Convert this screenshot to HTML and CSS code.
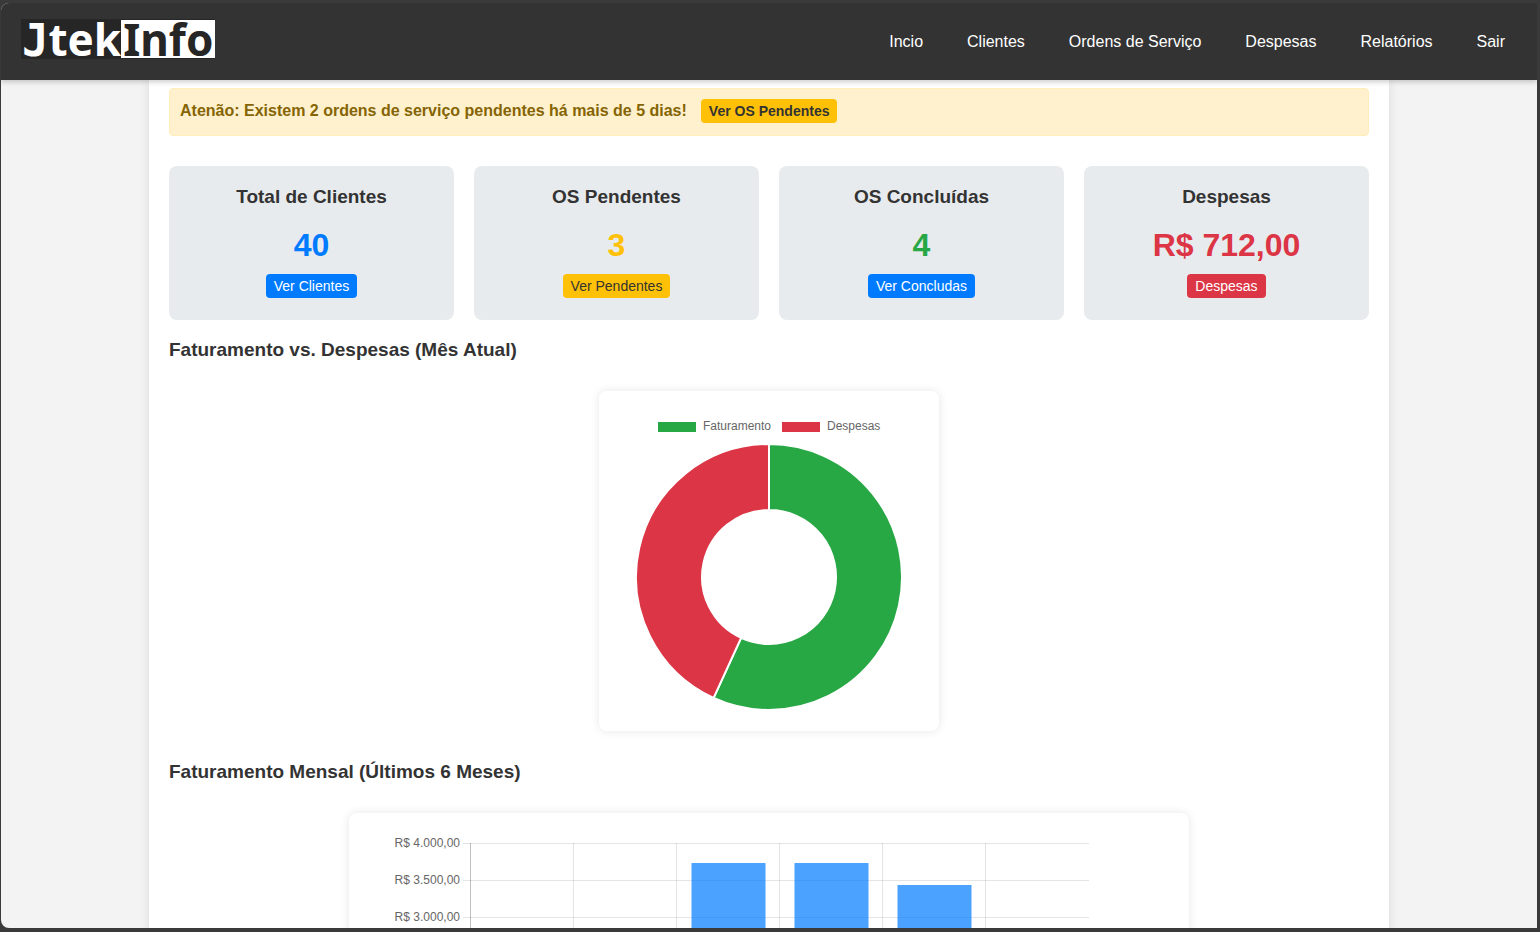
FILE: index.html
```html
<!DOCTYPE html>
<html lang="pt-br">
<head>
    <meta charset="UTF-8">
    <meta name="viewport" content="width=device-width, initial-scale=1.0">
    <title>JtekInfo</title>
    <link rel="stylesheet" href="styles.css">
</head>
<body>
    <div class="page">
        <header class="navbar">
            <a href="#" class="logo"><span class="logo-jtek"><span class="logo-j">J</span>tek</span><span class="logo-info">Info</span></a>
            <nav>
                <ul class="nav-links">
                    <li><a href="#">Incio</a></li>
                    <li><a href="#">Clientes</a></li>
                    <li><a href="#">Ordens de Serviço</a></li>
                    <li><a href="#">Despesas</a></li>
                    <li><a href="#">Relatórios</a></li>
                    <li><a href="#">Sair</a></li>
                </ul>
            </nav>
        </header>

        <main class="container">
            <div class="alert">
                <span>Atenão: Existem 2 ordens de serviço pendentes há mais de 5 dias!</span>
                <a href="#" class="btn btn-warning">Ver OS Pendentes</a>
            </div>

            <div class="cards">
                <div class="card">
                    <h3>Total de Clientes</h3>
                    <p class="value blue">40</p>
                    <a href="#" class="btn btn-primary">Ver Clientes</a>
                </div>
                <div class="card">
                    <h3>OS Pendentes</h3>
                    <p class="value yellow">3</p>
                    <a href="#" class="btn btn-warning">Ver Pendentes</a>
                </div>
                <div class="card">
                    <h3>OS Concluídas</h3>
                    <p class="value green">4</p>
                    <a href="#" class="btn btn-primary">Ver Concludas</a>
                </div>
                <div class="card">
                    <h3>Despesas</h3>
                    <p class="value red">R$ 712,00</p>
                    <a href="#" class="btn btn-danger">Despesas</a>
                </div>
            </div>

            <h3 class="chart-title">Faturamento vs. Despesas (Mês Atual)</h3>
            <div class="chart-box chart-donut">
                <svg viewBox="0 0 300 300">
                    <rect x="39" y="11" width="38" height="10" fill="#28a745"/>
                    <text x="84" y="19">Faturamento</text>
                    <rect x="163" y="11" width="38" height="10" fill="#dc3545"/>
                    <text x="208" y="19">Despesas</text>
                    <g stroke="#fff" stroke-width="2">
                        <path fill="#28a745" d="M150 33A133 133 0 1 1 94.6 286.9L122.1 226.9A67 67 0 1 0 150 99Z"/>
                        <path fill="#dc3545" d="M94.6 286.9A133 133 0 0 1 150 33V99A67 67 0 0 0 122.1 226.9Z"/>
                    </g>
                </svg>
            </div>

            <h3 class="chart-title">Faturamento Mensal (Últimos 6 Meses)</h3>
            <div class="chart-box chart-bar">
                <svg viewBox="0 0 800 400">
                    <!-- grade -->
                    <path class="grid" d="M94 10.5H720M94 47.5H720M94 84.5H720M94 121.5H720M94 158.5H720M94 195.5H720M94 232.5H720M94 269.5H720M94 306.5H720M204.5 10V306M307.5 10V306M410.5 10V306M513.5 10V306M616.5 10V306"/>
                    <path class="axis" d="M101.5 10V306"/>
                    <g text-anchor="end">
                        <text x="91" y="14">R$ 4.000,00</text>
                        <text x="91" y="51">R$ 3.500,00</text>
                        <text x="91" y="88">R$ 3.000,00</text>
                    </g>
                    <!-- barras -->
                    <g class="bars">
                        <rect x="322.5" y="30" width="74" height="276"/>
                        <rect x="425.5" y="30" width="74" height="276"/>
                        <rect x="528.5" y="52" width="74" height="254"/>
                    </g>
                </svg>
            </div>
        </main>
    </div>
</body>
</html>
```
FILE: styles.css
```css
* {
    box-sizing: border-box;
}
body {
    font-family: "Liberation Sans", Arial, sans-serif;
    background: #3a3a3a;
    color: #333;
    margin: 0;
    height: 100vh;
    padding: 3px 3px 4px 1px;
    overflow: hidden;
}
h3, p, ul {
    margin: 0;
    padding: 0;
}
a {
    text-decoration: none;
}
.page {
    height: 100%;
    background: #f3f3f3;
    border-radius: 8px 0 0 8px;
    overflow: hidden;
    display: flex;
    flex-direction: column;
}

/* Menu */
.navbar {
    position: relative;
    z-index: 1;
    flex: none;
    height: 77px;
    padding: 0 20px;
    background: #333;
    box-shadow: 0 2px 5px rgba(0, 0, 0, 0.2);
    display: flex;
    justify-content: space-between;
    align-items: center;
}
.logo {
    display: flex;
    height: 40px;
    font: bold 44px/39px "Noto Sans", sans-serif;
    color: #fff;
    background: #262626;
    padding: 1px 0 1px 1px;
    margin-bottom: 5px;
}
.logo-j {
    font-family: "DejaVu Sans Mono", monospace;
    line-height: 1px;
}
.logo-info {
    background: #fff;
    color: #262626;
    padding: 0 2px;
}
.nav-links {
    list-style: none;
    display: flex;
    gap: 20px;
}
.nav-links a {
    color: #fff;
    padding: 8px 12px;
}

/* Conteudo */
.container {
    flex: none;
    width: 100%;
    max-width: 1240px;
    margin: 0 auto;
    padding: 8px 20px 20px;
    background: #fff;
    box-shadow: 0 0 10px rgba(0, 0, 0, 0.1);
}
.alert {
    display: flex;
    align-items: center;
    gap: 14px;
    padding: 10px 10px 12px;
    margin-bottom: 30px;
    background: #fff1cd;
    border: 1px solid #ffeeba;
    border-radius: 4px;
    color: #856404;
    font-weight: bold;
}
.btn {
    display: inline-block;
    padding: 4px 8px;
    border-radius: 4px;
    font-size: 14px;
    line-height: 16px;
    color: #fff;
}
.btn-primary { background: #007bff; }
.btn-warning { background: #ffc107; color: #333; }
.btn-danger { background: #dc3545; }

.cards {
    display: grid;
    grid-template-columns: repeat(4, 1fr);
    gap: 20px;
}
.card {
    display: flex;
    flex-direction: column;
    align-items: center;
    padding: 20px 20px 22px;
    background: #e8ebee;
    border-radius: 8px;
}
.card h3, .chart-title {
    font-size: 19px;
    line-height: 22px;
}
.value {
    margin: 18px 0 10px;
    font-size: 32px;
    line-height: 38px;
    font-weight: bold;
}
.blue { color: #007bff; }
.yellow { color: #ffc107; }
.green { color: #28a745; }
.red { color: #dc3545; }

/* Graficos */
.chart-title {
    margin-top: 19px;
}
.chart-box {
    margin: 30px auto;
    padding: 20px;
    background: #fff;
    border-radius: 8px;
    box-shadow: 0 0 10px rgba(0, 0, 0, 0.1);
}
.chart-donut { max-width: 340px; }
.chart-bar { max-width: 840px; }
.chart-box svg {
    display: block;
    width: 100%;
}
.chart-box text {
    font-size: 12px;
    fill: #666;
}
.grid {
    stroke: rgba(0, 0, 0, 0.1);
}
.axis {
    stroke: rgba(0, 0, 0, 0.25);
}
.bars rect {
    fill: rgba(0, 123, 255, 0.7);
}
```
